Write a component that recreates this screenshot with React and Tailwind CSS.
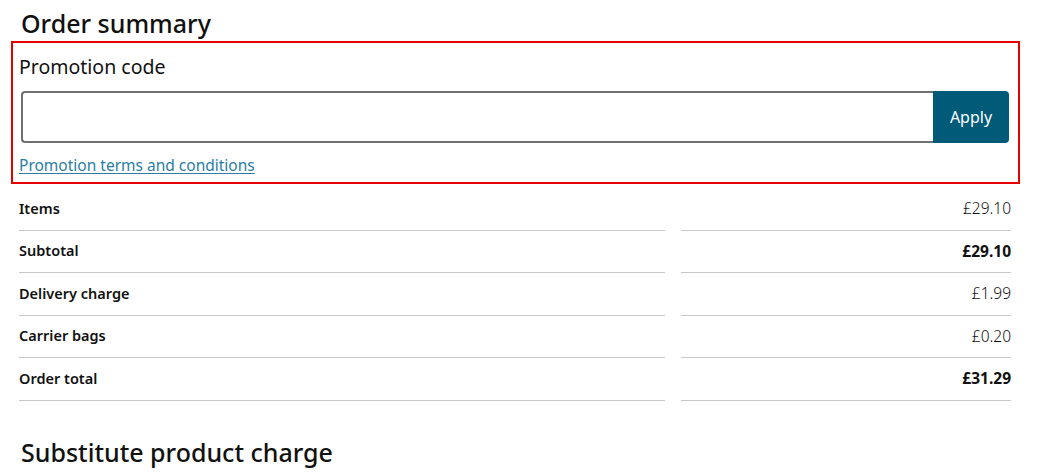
const rows = [
  { label: "Items", value: "£29.10", bold: false },
  { label: "Subtotal", value: "£29.10", bold: true },
  { label: "Delivery charge", value: "£1.99", bold: false },
  { label: "Carrier bags", value: "£0.20", bold: false },
  { label: "Order total", value: "£31.29", bold: true },
];

export default function App() {
  return (
    <div className="min-h-screen bg-white text-[#111] font-['Noto_Sans','Open_Sans',sans-serif]">
      <div className="pl-[11px] pr-[23px] pt-[6px]">
        <h2 className="pl-[10px] text-[25px] leading-[34px] font-medium">Order summary</h2>

        <div className="mt-[1px] border-[2.5px] border-[#e60000] pl-[6px] pr-[9px] pt-[11px] pb-[7px]">
          <p className="text-[19.5px] leading-[26px]">Promotion code</p>
          <div className="mt-[11px] ml-[2px] flex h-[52px]">
            <input
              type="text"
              className="flex-1 rounded-l-[4px] border-2 border-r-0 border-[#707070] px-3 text-base outline-none"
            />
            <button className="w-[76px] rounded-r-[4px] bg-[#005a78] text-[16px] text-white">Apply</button>
          </div>
          <a href="#" className="mt-[12px] block text-[15.5px] leading-[20px] text-[#2b7da6] underline underline-offset-2">
            Promotion terms and conditions
          </a>
        </div>

        <div className="mt-[4px] pl-[8px] pr-[9px]">
          {rows.map((r) => (
            <div key={r.label} className="flex gap-4">
              <div className="flex h-[42.5px] flex-1 items-center border-b border-[#c8c8c8] text-[14.5px] font-semibold">
                {r.label}
              </div>
              <div
                className={`flex h-[42.5px] w-[330px] items-center justify-end border-b border-[#c8c8c8] text-[15.5px] ${
                  r.bold ? "font-bold" : "font-light"
                }`}
              >
                {r.value}
              </div>
            </div>
          ))}
        </div>

        <h2 className="mt-[34px] pl-[10px] text-[25px] leading-[34px] font-medium">Substitute product charge</h2>
      </div>
    </div>
  );
}
